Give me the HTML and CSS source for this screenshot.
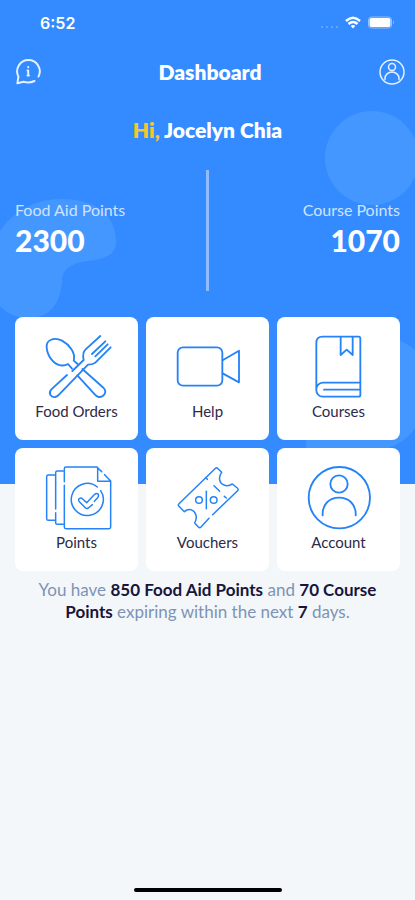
FILE: index.html
```html
<!DOCTYPE html>
<html lang="en">
<head>
<meta charset="utf-8">
<meta name="viewport" content="width=device-width, initial-scale=1">
<title>Dashboard</title>
<link rel="stylesheet" href="styles.css">
</head>
<body>
<div class="screen">
  <div class="backdrop" aria-hidden="true">
    <svg class="shape shape-left" viewBox="0 0 118 122">
      <path d="M0 33C14 12 36 1 62 1C92 1 116 14 116 44C116 55 108 60 95 62C80 64 62 66 62 84C60 106 50 120 28 120C14 120 6 114 0 108Z"/>
    </svg>
    <div class="shape shape-circle"></div>
    <svg class="shape shape-right" viewBox="0 0 110 150">
      <path d="M110 12C96 0 84 -2 66 2C40 8 20 40 12 78C0 88 0 102 2 112C6 126 26 124 42 120C66 116 96 112 110 90Z"/>
    </svg>
  </div>

  <div class="status">
    <span class="time">6:52</span>
    <svg class="signals" viewBox="0 0 76 16" aria-hidden="true">
      <g class="dots"><circle cx="3" cy="12" r="1"/><circle cx="8" cy="12" r="1"/><circle cx="13" cy="12" r="1"/><circle cx="18" cy="12" r="1"/></g>
      <g class="wifi"><path d="M27 6Q34 -0.5 41 6"/><path d="M29.500 9Q34 5 38.500 9"/></g>
      <path class="solid" d="M34 13.500L31.700 11Q34 9.200 36.300 11Z"/>
      <rect class="battery" x="49.500" y="2" width="23" height="11" rx="3"/>
      <rect class="solid" x="50.500" y="3" width="21" height="9" rx="2"/>
      <path class="cap" d="M74 5.500Q76 7.500 74 9.500Z"/>
    </svg>
  </div>

  <header class="topbar">
    <button class="icon-button info" type="button" aria-label="Information">
      <svg viewBox="0 0 26 26">
        <path d="M23.500 17.500A11.300 11.300 0 1 0 3.400 17.500L2.400 24.300L8.500 22.700Q14 24.500 19.500 22"/>
        <path d="M12.500 11.500H13.200V16.500M12.500 16.500H14M13.200 8V8.200"/>
      </svg>
    </button>
    <h1>Dashboard</h1>
    <button class="icon-button" type="button" aria-label="Profile">
      <svg viewBox="0 0 26 26">
        <circle cx="13" cy="13" r="12"/>
        <circle cx="13" cy="8" r="3.500"/>
        <path d="M6 20.500V19.500A7 6.500 0 0 1 20 19.500V20.500"/>
      </svg>
    </button>
  </header>

  <main>
    <p class="greeting"><span class="hi">Hi,</span> Jocelyn Chia</p>

    <section class="balances">
      <div class="balance">
        <span class="label">Food Aid Points</span>
        <strong>2300</strong>
      </div>
      <div class="divider"></div>
      <div class="balance balance-end">
        <span class="label">Course Points</span>
        <strong>1070</strong>
      </div>
    </section>

    <nav class="tiles">
      <a class="tile" href="#orders">
        <svg viewBox="96 72 210 198">
          <path d="M203 162L191 152C198 128 178 104 156 92C132 80 108 90 110 112C112 138 130 162 152 166Q164 168 174 162L186 176"/>
          <path d="M217 177L281 234C292 246 282 262 266 261Q260 260 255 254L202 196"/>
          <path d="M171 195L124 238C114 250 122 263 136 261Q142 260 147 254L234 164Q246 164 256 158L302 112M271 78L227 118Q216 128 221 150L187 183M286 94L246 132M293 103L256 139"/>
        </svg>
        <span>Food Orders</span>
      </a>
      <a class="tile" href="#help">
        <svg viewBox="96 72 210 198">
          <rect x="110" y="112" width="134" height="115" rx="16"/>
          <path d="M245 151L294 122V217L245 190"/>
        </svg>
        <span>Help</span>
      </a>
      <a class="tile" href="#courses">
        <svg viewBox="96 72 210 198">
          <path d="M133 240V98Q133 80 152 80H260Q265 80 265 86V255Q265 260 260 260H153C126 260 126 218 153 218H264M264 239H156"/>
          <path d="M206 81V135L224 119L242 135V81"/>
        </svg>
        <span>Courses</span>
      </a>
      <a class="tile" href="#points">
        <svg class="fine" viewBox="96 69 210 198">
          <path d="M163 119V80Q163 75 168 75H260L275 89M284 98L302 117V255Q302 260 297 260H168Q163 260 163 255V130M263 76V118H301"/>
          <path d="M160 87H142Q137 87 137 92V201M137 212V242Q137 247 142 247H160M135 99H115Q110 99 110 104V230Q110 235 115 235H135"/>
          <path d="M272 146A48 48 0 1 1 262 135"/>
          <path d="M247 188L235 198Q230 201 226 197L208 179Q203 172 209 169Q214 167 218 171L230 182L254 157Q260 152 265 157Q267 162 263 167L253 178"/>
        </svg>
        <span>Points</span>
      </a>
      <a class="tile" href="#vouchers">
        <svg class="fine" viewBox="96 69 210 198">
          <path d="M204 229L180 255Q176 259 172 255L161 243C171 225 164 208 150 203Q139 201 130 209L114 193Q110 189 114 185L222 80Q227 75 231 80L242 91C230 107 236 125 249 129Q261 134 274 126L289 138Q294 142 289 147L215 218"/>
          <path d="M195 107L199 112M219 131L236 148M250 163L256 168"/>
          <circle cx="174" cy="174" r="10"/><circle cx="218" cy="174" r="10"/>
          <path d="M196 148V200"/>
        </svg>
        <span>Vouchers</span>
      </a>
      <a class="tile" href="#account">
        <svg viewBox="96 69 210 198">
          <circle cx="202" cy="167" r="92"/>
          <circle cx="201" cy="126" r="26"/>
          <path d="M152 220C150 188 171 167 201 167S253 188 251 220"/>
        </svg>
        <span>Account</span>
      </a>
    </nav>

    <p class="notice">You have <b>850 Food Aid Points</b> and <b>70 Course Points</b> expiring within the next <b>7</b> days.</p>
  </main>

  <div class="home-bar"></div>
</div>
</body>
</html>
```
FILE: styles.css
```css
* {
  box-sizing: border-box;
}

body {
  margin: 0;
  background: #f4f7fa;
  color: #fff;
  font-family: Lato, "Liberation Sans", sans-serif;
}

.screen {
  position: relative;
  min-height: 100vh;
  display: flex;
  flex-direction: column;
}

main {
  position: relative;
}

.backdrop {
  position: absolute;
  inset: 0 0 auto;
  height: 484px;
  overflow: hidden;
  background: #338bff;
}

.shape {
  position: absolute;
  fill: #4497ff;
}

.shape-left {
  left: 0;
  top: 198px;
  width: 118px;
}

.shape-circle {
  top: 111px;
  right: -4px;
  width: 94px;
  height: 94px;
  border-radius: 50%;
  background: #4497ff;
}

.shape-right {
  right: 0;
  top: 338px;
  width: 110px;
}

.status {
  position: relative;
  display: flex;
  align-items: center;
  justify-content: space-between;
  height: 46px;
  padding: 0 20px 0 40px;
}

.time {
  font: 600 16px Inter, sans-serif;
}

.signals {
  width: 76px;
  height: 16px;
}

.dots {
  fill: #70adff;
}

.wifi {
  fill: none;
  stroke: #fff;
  stroke-width: 2.4;
}

.solid {
  fill: #fff;
}

.battery {
  fill: none;
  stroke: #8fc0ff;
}

.cap {
  fill: #8fc0ff;
}

.topbar {
  position: relative;
  display: flex;
  align-items: center;
  justify-content: space-between;
  height: 52px;
  padding: 0 10px 0 15px;
}

.icon-button {
  width: 26px;
  height: 26px;
  padding: 0;
  border: 0;
  background: none;
}

.icon-button svg {
  display: block;
  fill: none;
  stroke: #e6f1ff;
  stroke-width: 1.5;
  stroke-linecap: round;
  stroke-linejoin: round;
}

.info svg {
  stroke-width: 2;
}

h1 {
  margin: 0;
  font-size: 21px;
  font-weight: 800;
  line-height: 28px;
}

.greeting {
  margin: 18px 0 26px;
  font-size: 21px;
  font-weight: 800;
  line-height: 28px;
  text-align: center;
}

.hi {
  color: #f4c534;
}

.balances {
  display: grid;
  grid-template-columns: 1fr 3px 1fr;
  height: 121px;
  padding: 0 15px;
}

.balance {
  display: flex;
  flex-direction: column;
  padding-top: 28px;
}

.balance-end {
  align-items: flex-end;
}

.label {
  color: #cfe3ff;
  font-size: 16px;
  line-height: 24px;
}

.balance strong {
  font-size: 30px;
  font-weight: 900;
  line-height: 36px;
}

.divider {
  height: 100%;
  background: #8fbdff;
}

.tiles {
  display: grid;
  grid-template-columns: repeat(3, 1fr);
  gap: 8px;
  margin-top: 26px;
  padding: 0 15px;
}

.tile {
  display: flex;
  flex-direction: column;
  align-items: center;
  height: 123px;
  padding-top: 17px;
  border-radius: 8px;
  background: #fff;
  color: #2c2a4a;
  font-size: 15px;
  line-height: 22px;
  text-decoration: none;
}

.tile svg {
  width: 70px;
  height: 66px;
  fill: none;
  stroke: #2583f7;
  stroke-width: 5.5;
  stroke-linecap: round;
  stroke-linejoin: round;
}

.tile .fine {
  stroke-width: 4.5;
}

.notice {
  margin: 8px 0 0;
  padding: 0 32px;
  color: #7d93b5;
  font-size: 17px;
  line-height: 22px;
  text-align: center;
}

.notice b {
  color: #17153b;
  font-weight: 700;
}

.home-bar {
  width: 148px;
  height: 4px;
  margin: auto auto 8px;
  border-radius: 2px;
  background: #000;
}
```
